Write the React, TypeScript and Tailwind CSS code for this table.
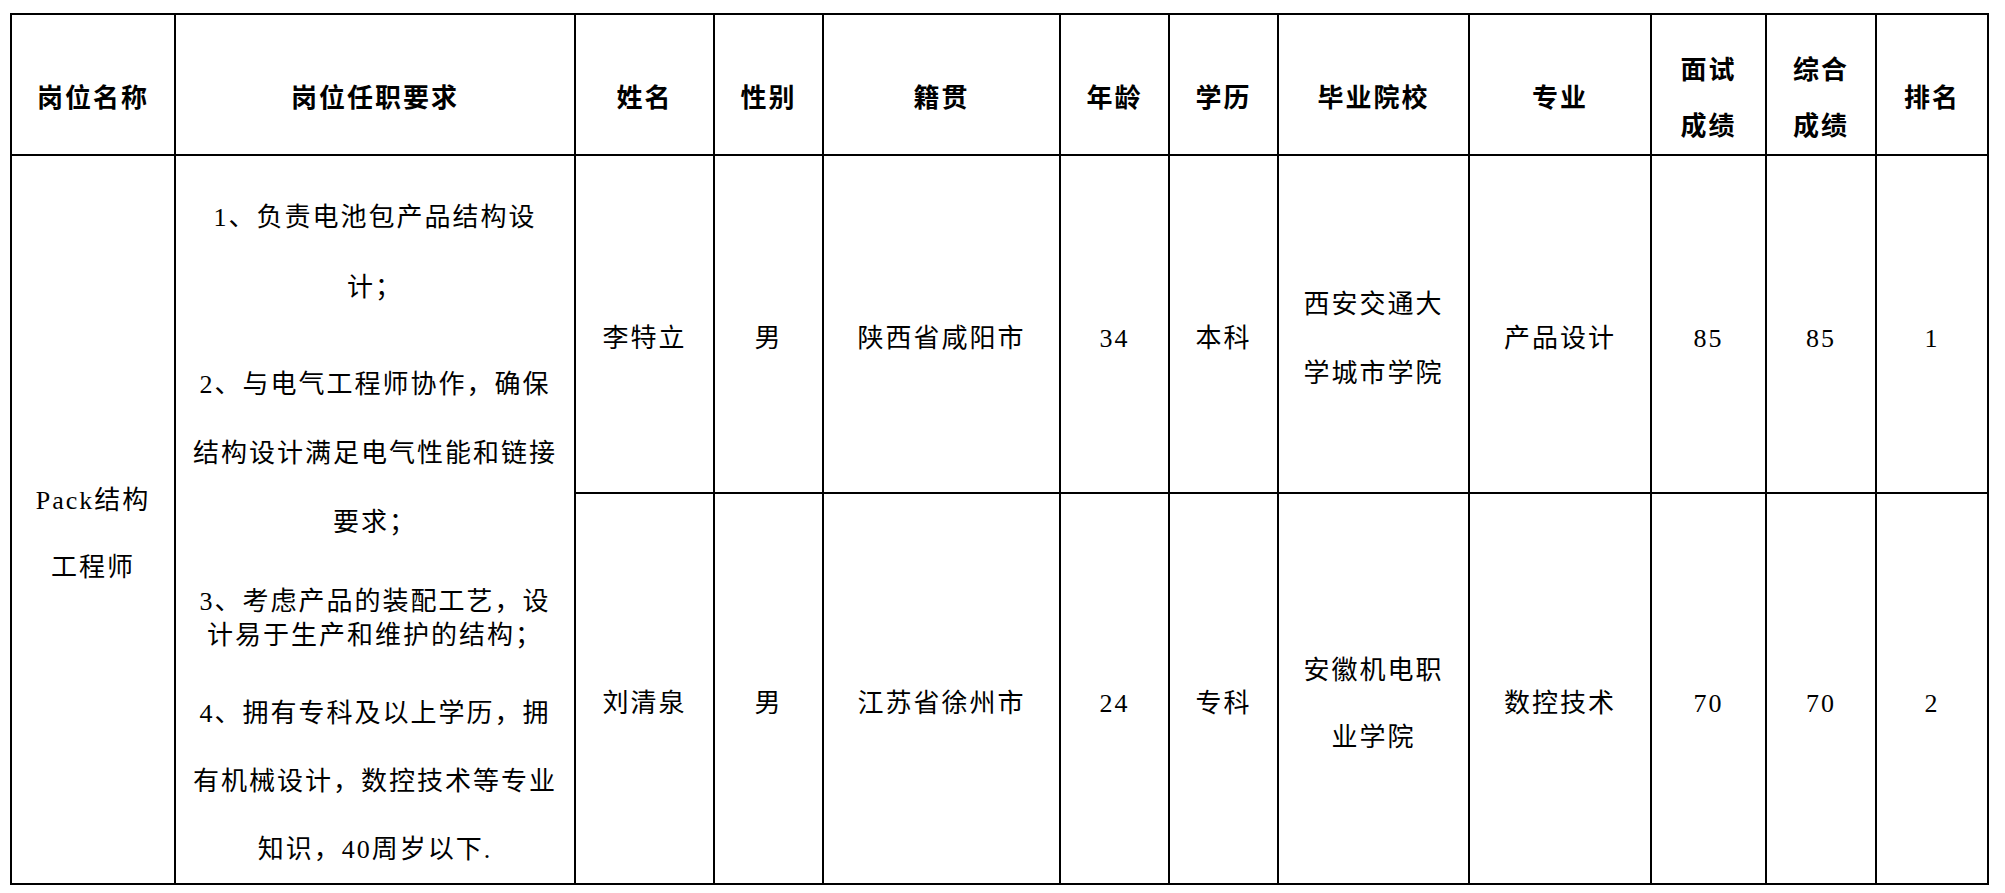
import React from "react";

type Cell = {
  lines: string[];
  lh?: string;
};

const headers: { lines: string[] }[] = [
  { lines: ["岗位名称"] },
  { lines: ["岗位任职要求"] },
  { lines: ["姓名"] },
  { lines: ["性别"] },
  { lines: ["籍贯"] },
  { lines: ["年龄"] },
  { lines: ["学历"] },
  { lines: ["毕业院校"] },
  { lines: ["专业"] },
  { lines: ["面试", "成绩"] },
  { lines: ["综合", "成绩"] },
  { lines: ["排名"] },
];

const rows: Cell[][] = [
  [
    { lines: ["李特立"] },
    { lines: ["男"] },
    { lines: ["陕西省咸阳市"] },
    { lines: ["34"] },
    { lines: ["本科"] },
    { lines: ["西安交通大", "学城市学院"], lh: "leading-[69px]" },
    { lines: ["产品设计"] },
    { lines: ["85"] },
    { lines: ["85"] },
    { lines: ["1"] },
  ],
  [
    { lines: ["刘清泉"] },
    { lines: ["男"] },
    { lines: ["江苏省徐州市"] },
    { lines: ["24"] },
    { lines: ["专科"] },
    { lines: ["安徽机电职", "业学院"], lh: "leading-[67px]" },
    { lines: ["数控技术"] },
    { lines: ["70"] },
    { lines: ["70"] },
    { lines: ["2"] },
  ],
];

const Lines = ({ lines }: { lines: string[] }) => (
  <>
    {lines.map((l, i) => (
      <React.Fragment key={i}>
        {i > 0 && <br />}
        {l}
      </React.Fragment>
    ))}
  </>
);

const App = () => {
  return (
    <div className="min-h-screen bg-white pl-[10px] pt-[13px] text-black [font-family:'Liberation_Serif','Noto_Sans_CJK_SC',serif]">
      <div className="grid w-max grid-cols-[162px_398px_137px_107px_235px_107px_107px_189px_180px_113px_108px_110px] grid-rows-[139px_336px_389px] gap-[2px] bg-black p-[2px] text-[26px] tracking-[2px]">
        {/* HEADER */}
        {headers.map((h, i) => (
          <div
            key={i}
            className="flex items-center justify-center bg-white pt-[28px] text-center font-bold leading-[56px] whitespace-nowrap"
          >
            <div>
              <Lines lines={h.lines} />
            </div>
          </div>
        ))}

        {/* JOB NAME */}
        <div className="row-span-2 flex items-center justify-center bg-white pt-[28px] text-center leading-[67px]">
          <div>
            Pack结构
            <br />
            工程师
          </div>
        </div>

        {/* REQUIREMENTS */}
        <div className="row-span-2 flex flex-col items-center bg-white pt-[27px] text-center whitespace-nowrap">
          <p className="leading-[70px]">
            1、负责电池包产品结构设
            <br />
            计；
          </p>
          <p className="mt-[27px] leading-[69px]">
            2、与电气工程师协作，确保
            <br />
            结构设计满足电气性能和链接
            <br />
            要求；
          </p>
          <p className="mt-[28px] leading-[34px]">
            3、考虑产品的装配工艺，设
            <br />
            计易于生产和维护的结构；
          </p>
          <p className="mt-[27px] leading-[68px]">
            4、拥有专科及以上学历，拥
            <br />
            有机械设计，数控技术等专业
            <br />
            知识，40周岁以下.
          </p>
        </div>

        {/* CANDIDATES */}
        {rows.map((row, r) =>
          row.map((c, i) => (
            <div
              key={`${r}-${i}`}
              className={`flex items-center justify-center bg-white pt-[30px] text-center whitespace-nowrap ${
                c.lh ?? "leading-[68px]"
              }`}
            >
              <div>
                <Lines lines={c.lines} />
              </div>
            </div>
          ))
        )}
      </div>
    </div>
  );
};

export default App;
